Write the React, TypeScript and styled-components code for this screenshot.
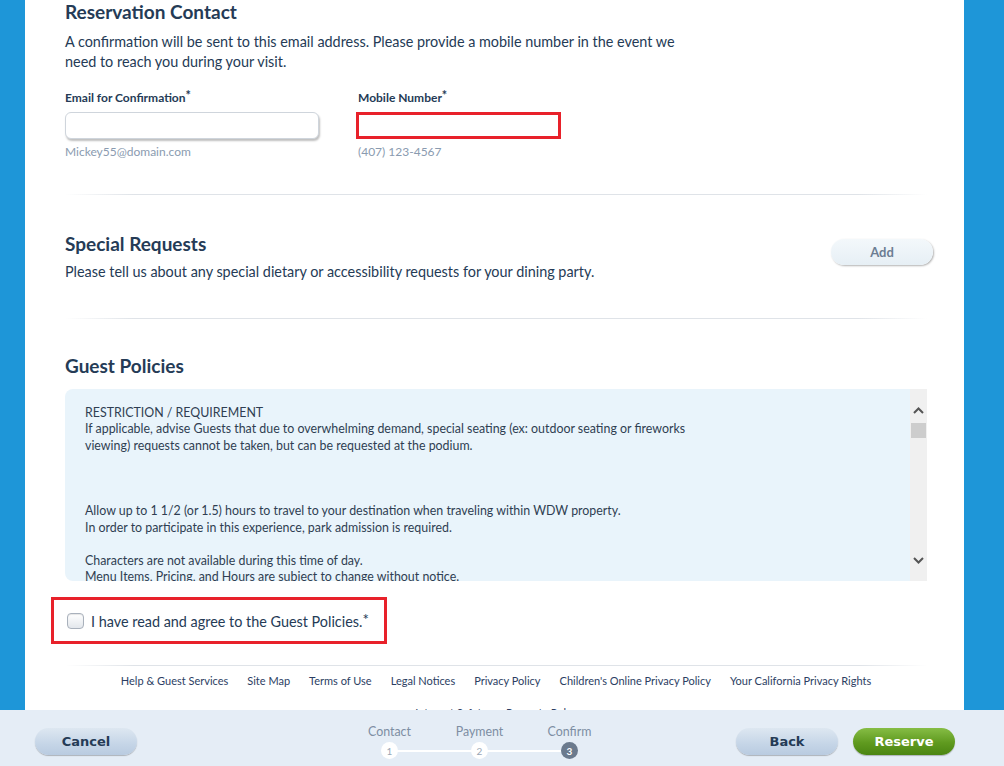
import React from "react";
import styled, { createGlobalStyle } from "styled-components";

const navy = "#253b56";
const hintGray = "#8a9bb0";

const GlobalStyle = createGlobalStyle`
  html, body {
    margin: 0;
    padding: 0;
    height: 766px;
    overflow: hidden;
    background: #1e96d8;
    font-family: Lato, "Open Sans", sans-serif;
    color: ${navy};
  }
`;

const Screen = styled.div`
  display: flex;
  flex-direction: column;
  height: 766px;
`;

const Panel = styled.main`
  height: 710px;
  overflow: hidden;
  margin: 0 40px 0 25px;
  background: #fff;
  padding: 0 37px 0 40px;
`;

const SectionTitle = styled.h2<{ $top?: number }>`
  margin: ${(p) => p.$top ?? 0}px 0 0;
  font-size: 19px;
  line-height: 24px;
  font-weight: 700;
  color: ${navy};
`;

const Copy = styled.p<{ $top?: number; $width?: number }>`
  margin: ${(p) => p.$top ?? 0}px 0 0;
  font-size: 14.4px;
  line-height: 20px;
  max-width: ${(p) => (p.$width ? `${p.$width}px` : "none")};
`;

const Star = styled.span`
  font-size: 1.05em;
  position: relative;
  top: -2px;
`;

const Fields = styled.div`
  display: flex;
  margin-top: 18px;
`;

const Field = styled.div<{ $width: number }>`
  display: flex;
  flex-direction: column;
  width: ${(p) => p.$width}px;
`;

const Label = styled.label`
  font-size: 12px;
  line-height: 16px;
  font-weight: 700;
`;

const Input = styled.div<{ $flagged?: boolean }>`
  box-sizing: border-box;
  margin-top: 6px;
  height: 27px;
  background: #fff;
  ${(p) =>
    p.$flagged
      ? `
    width: 205px;
    margin-left: -2px;
    border: 3px solid #e8212a;
  `
      : `
    width: 254px;
    border: 1px solid #cfd5dc;
    border-radius: 6px;
    box-shadow: 1px 2px 2px rgba(0, 0, 0, 0.25);
  `}
`;

const Hint = styled.div`
  margin-top: 6px;
  font-size: 12px;
  line-height: 14px;
  color: ${hintGray};
`;

const Divider = styled.hr<{ $top: number; $bottom: number }>`
  margin: ${(p) => p.$top}px 0 ${(p) => p.$bottom}px;
  border: 0;
  height: 1px;
  background: linear-gradient(
    to right,
    rgba(220, 225, 231, 0),
    #dfe3e8 8%,
    #dfe3e8 92%,
    rgba(220, 225, 231, 0)
  );
`;

const RequestRow = styled.div`
  display: flex;
  justify-content: space-between;
  align-items: flex-start;
`;

const PillButton = styled.button`
  width: 102px;
  height: 26px;
  margin-top: 7px;
  margin-right: -6px;
  border: 0;
  border-radius: 13px;
  background: linear-gradient(#f3f8fb, #e6eff5);
  box-shadow: 1px 1px 2px rgba(0, 0, 0, 0.3);
  font-family: inherit;
  font-size: 13px;
  font-weight: 700;
  color: #6c7d92;
`;

const PolicyBox = styled.div`
  display: flex;
  margin-top: 11px;
  height: 192px;
  background: #e9f4fb;
  border-radius: 8px 0 0 8px;
  overflow: hidden;
`;

const PolicyText = styled.div`
  flex: 1;
  padding: 16px 20px 0;
  font-size: 12.4px;
  line-height: 16.4px;
  color: #2f3e52;
  p {
    margin: 0;
  }
`;

const Scrollbar = styled.div`
  width: 17px;
  background: #f0f0f0;
  display: flex;
  flex-direction: column;
  align-items: center;
  padding-top: 18px;
  svg {
    display: block;
  }
`;

const Thumb = styled.div`
  width: 15px;
  height: 15px;
  margin-top: 9px;
  background: #cdcdcd;
`;

const ScrollSpacer = styled.div<{ $fixed?: number }>`
  flex: ${(p) => (p.$fixed ? `0 0 ${p.$fixed}px` : "1")};
`;

const AgreeBox = styled.div`
  display: flex;
  align-items: center;
  gap: 7px;
  box-sizing: border-box;
  width: 336px;
  height: 47px;
  margin: 16px 0 0 -14px;
  padding-left: 13px;
  border: 3px solid #e8212a;
  font-size: 14.4px;
`;

const Check = styled.span`
  box-sizing: border-box;
  width: 17px;
  height: 16px;
  border: 1px solid #a9b1bc;
  border-radius: 4px;
  background: linear-gradient(#ffffff, #e3e7ec);
  box-shadow: inset 0 1px 1px rgba(0, 0, 0, 0.1);
`;

const FooterLinks = styled.nav`
  display: flex;
  flex-wrap: wrap;
  justify-content: center;
  column-gap: 19px;
  row-gap: 18px;
  margin: 0 -20px;
  padding: 0 40px;
  font-size: 11px;
  line-height: 14px;
  color: #2c3e63;
`;

const BottomBar = styled.footer`
  height: 56px;
  background: #e5edf6;
  display: flex;
  align-items: center;
  padding: 0 49px 0 35px;
`;

const NavButton = styled.button<{ $primary?: boolean }>`
  width: 102px;
  height: 27px;
  margin-top: 7px;
  border: 0;
  border-radius: 14px;
  font-family: Verdana, "DejaVu Sans", sans-serif;
  font-size: 13px;
  font-weight: 700;
  color: ${(p) => (p.$primary ? "#fff" : navy)};
  background: ${(p) =>
    p.$primary
      ? "linear-gradient(#86bd45, #5f9a1f 55%, #4b8512)"
      : "linear-gradient(#dde7f1, #c5d5e7 60%, #b9cbe0)"};
  box-shadow: 0 1px 1px rgba(0, 0, 0, 0.25);
`;

const Steps = styled.ol`
  flex: 1;
  display: flex;
  justify-content: center;
  margin: 0;
  padding: 8px 0 0 86px;
  list-style: none;
`;

const Step = styled.li`
  position: relative;
  width: 90px;
  display: flex;
  flex-direction: column;
  align-items: center;
  gap: 3px;
  font-size: 12.4px;
  line-height: 14px;
  color: #7d8ea3;
  &:not(:last-child)::after {
    content: "";
    position: absolute;
    left: 45px;
    width: 90px;
    bottom: 7px;
    height: 2px;
    background: #fff;
  }
`;

const Dot = styled.span<{ $current?: boolean }>`
  position: relative;
  z-index: 1;
  width: 17px;
  height: 17px;
  border-radius: 50%;
  display: flex;
  align-items: center;
  justify-content: center;
  font-size: 10px;
  font-weight: ${(p) => (p.$current ? 700 : 400)};
  background: ${(p) => (p.$current ? "#6b7a8d" : "#fff")};
  color: ${(p) => (p.$current ? "#fff" : "#9aa7b6")};
`;

const RightButtons = styled.div`
  display: flex;
  gap: 15px;
`;

const Chevron = ({ up }: { up?: boolean }) => (
  <svg width="11" height="7" viewBox="0 0 11 7">
    <path
      d={up ? "M1 6 L5.5 1.5 L10 6" : "M1 1 L5.5 5.5 L10 1"}
      fill="none"
      stroke="#555"
      strokeWidth="2"
    />
  </svg>
);

const footerLinks = [
  "Help & Guest Services",
  "Site Map",
  "Terms of Use",
  "Legal Notices",
  "Privacy Policy",
  "Children's Online Privacy Policy",
  "Your California Privacy Rights",
  "Internet Safety",
  "Property Rules",
];

export default function App(): React.JSX.Element {
  return (
    <Screen>
      <GlobalStyle />
      <Panel>
        <SectionTitle>Reservation Contact</SectionTitle>
        <Copy $top={8} $width={628}>
          A confirmation will be sent to this email address. Please provide a
          mobile number in the event we need to reach you during your visit.
        </Copy>
        <Fields>
          <Field $width={293}>
            <Label>
              Email for Confirmation<Star>*</Star>
            </Label>
            <Input />
            <Hint>Mickey55@domain.com</Hint>
          </Field>
          <Field $width={260}>
            <Label>
              Mobile Number<Star>*</Star>
            </Label>
            <Input $flagged />
            <Hint>(407) 123-4567</Hint>
          </Field>
        </Fields>

        <Divider $top={35} $bottom={37} />

        <RequestRow>
          <div>
            <SectionTitle>Special Requests</SectionTitle>
            <Copy $top={6}>
              Please tell us about any special dietary or accessibility
              requests for your dining party.
            </Copy>
          </div>
          <PillButton>Add</PillButton>
        </RequestRow>

        <Divider $top={36} $bottom={35} />

        <SectionTitle>Guest Policies</SectionTitle>
        <PolicyBox>
          <PolicyText>
            <p>RESTRICTION / REQUIREMENT</p>
            <p>
              If applicable, advise Guests that due to overwhelming demand,
              special seating (ex: outdoor seating or fireworks
              <br />
              viewing) requests cannot be taken, but can be requested at the
              podium.
            </p>
            <p>
              <br />
              <br />
              <br />
            </p>
            <p>
              Allow up to 1 1/2 (or 1.5) hours to travel to your destination
              when traveling within WDW property.
            </p>
            <p>
              In order to participate in this experience, park admission is
              required.
            </p>
            <p>
              <br />
            </p>
            <p>Characters are not available during this time of day.</p>
            <p>Menu Items, Pricing, and Hours are subject to change without notice.</p>
          </PolicyText>
          <Scrollbar>
            <Chevron up />
            <Thumb />
            <ScrollSpacer />
            <Chevron />
            <ScrollSpacer $fixed={17} />
          </Scrollbar>
        </PolicyBox>

        <AgreeBox>
          <Check />
          <span>
            I have read and agree to the Guest Policies.<Star>*</Star>
          </span>
        </AgreeBox>

        <Divider $top={21} $bottom={8} />

        <FooterLinks>
          {footerLinks.map((l) => (
            <span key={l}>{l}</span>
          ))}
        </FooterLinks>
      </Panel>

      <BottomBar>
        <NavButton>Cancel</NavButton>
        <Steps>
          <Step>
            Contact
            <Dot>1</Dot>
          </Step>
          <Step>
            Payment
            <Dot>2</Dot>
          </Step>
          <Step>
            Confirm
            <Dot $current>3</Dot>
          </Step>
        </Steps>
        <RightButtons>
          <NavButton>Back</NavButton>
          <NavButton $primary>Reserve</NavButton>
        </RightButtons>
      </BottomBar>
    </Screen>
  );
}
